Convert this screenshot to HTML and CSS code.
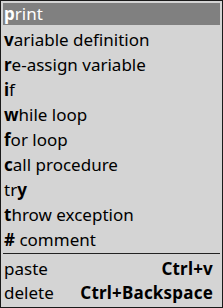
FILE: index.html
```html
<!DOCTYPE html>
<html lang="en">
<head>
  <meta charset="UTF-8">
  <meta name="viewport" content="width=device-width, initial-scale=1.0">
  <title>Insert menu</title>
  <link rel="stylesheet" href="styles.css">
</head>
<body>

  <div class="menu">
    <div class="item selected"><b>p</b>rint</div>
    <div class="item"><b>v</b>ariable definition</div>
    <div class="item"><b>r</b>e-assign variable</div>
    <div class="item"><b>i</b>f</div>
    <div class="item"><b>w</b>hile loop</div>
    <div class="item"><b>f</b>or loop</div>
    <div class="item"><b>c</b>all procedure</div>
    <div class="item">tr<b>y</b></div>
    <div class="item"><b>t</b>hrow exception</div>
    <div class="item"><b>#</b> comment</div>
    <div class="separator"></div>
    <div class="item action">paste <span class="shortcut">Ctrl+v</span></div>
    <div class="item action">delete <span class="shortcut">Ctrl+Backspace</span></div>
  </div>

</body>
</html>
```

FILE: styles.css
```css
html, body {
  margin: 0;
  padding: 0;
  background: #fff;
}

.menu {
  width: 223px;
  height: 308px;
  box-sizing: border-box;
  border: 1px solid #1a1a1a;
  background-color: #d4d4d4;
  padding: 2px 2px;
  font-family: "Noto Sans", sans-serif;
  font-size: 17px;
  color: #000;
}

.item {
  height: 25px;
  line-height: 24px;
  padding-left: 1px;
  white-space: nowrap;
}

.item b {
  font-weight: bold;
}

.selected {
  background-color: #808080;
  color: #fff;
  height: 22px;
  line-height: 22px;
  margin-bottom: 3px;
}

.separator {
  border-top: 1px solid #222;
  margin: 0 0 3px;
}

.action {
  display: flex;
  justify-content: space-between;
  height: 24px;
  padding-right: 7px;
}

.shortcut {
  font-weight: bold;
  letter-spacing: 0.2px;
}
```
